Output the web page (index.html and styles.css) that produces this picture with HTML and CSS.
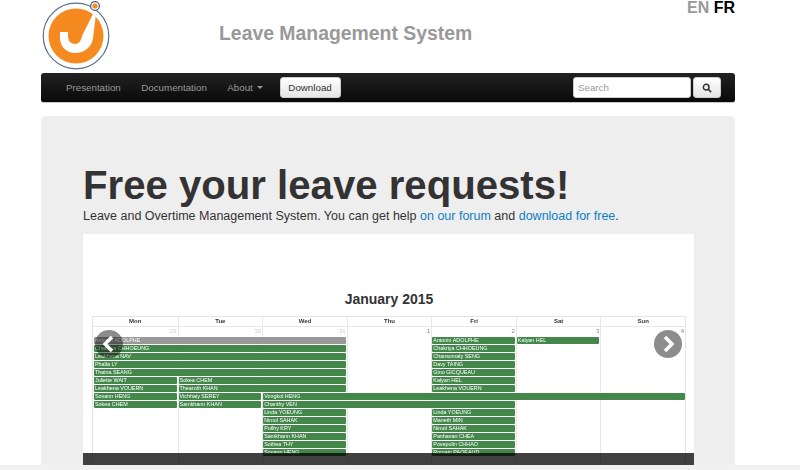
FILE: index.html
```html
<!DOCTYPE html>
<html lang="en">
<head>
  <meta charset="UTF-8" />
  <title>Leave Management System</title>
  <link rel="stylesheet" href="styles.css">
</head>
<body>

  <div class="page">
    <div class="header">
      <svg class="logo" viewBox="0 0 70 70" width="70" height="70">
        <circle cx="35" cy="35" r="32.8" fill="none" stroke="#5b6f8c" stroke-width="1.2"/>
        <circle cx="35" cy="35" r="27.5" fill="#f58a20"/>
        <path d="M19 31 H27 V35 C27 40 30 43 34 43 C38 43 40 40 41 35 L52 13 L55 13 L52 37 C51 46 43 52 34 52 C25 52 19 45 19 37 Z" fill="#fff"/>
        <circle cx="54" cy="5" r="4.4" fill="#fff" stroke="#4f6585" stroke-width="1.3"/>
        <circle cx="54" cy="5" r="2.6" fill="#f58a20"/>
      </svg>
      <div class="brand">Leave Management System</div>
      <div class="langs"><a class="lang-off">EN</a> <a class="lang-on">FR</a></div>
    </div>

    <div class="navbar">
      <a class="nav-link">Presentation</a>
      <a class="nav-link">Documentation</a>
      <a class="nav-link nav-about">About <span class="caret"></span></a>
      <a class="btn btn-download">Download</a>
      <div class="search">
        <input class="search-input" type="text" placeholder="Search" />
        <a class="btn btn-search">
          <svg viewBox="0 0 12 12" width="10" height="10">
            <circle cx="5" cy="5" r="3.4" fill="none" stroke="#333" stroke-width="1.8"/>
            <path d="M7.5 7.5 L11 11" stroke="#333" stroke-width="2"/>
          </svg>
        </a>
      </div>
    </div>

    <div class="jumbotron">
      <h1>Free your leave requests!</h1>
      <p class="lead">Leave and Overtime Management System. You can get help <a>on our forum</a> and <a>download for free</a>.</p>

      <div class="carousel">
        <h2 class="month">January 2015</h2>
        <div class="calendar">
          <div class="days">
            <div>Mon</div><div>Tue</div><div>Wed</div><div>Thu</div><div>Fri</div><div>Sat</div><div>Sun</div>
          </div>
          <div class="week">
            <div class="cells">
              <div class="cell old">29</div><div class="cell old">30</div><div class="cell old">31</div>
              <div class="cell">1</div><div class="cell">2</div><div class="cell">3</div><div class="cell">4</div>
            </div>
            <div class="events">
              <div class="ev gray s1 c3">Antonin ADOLPHE</div>
              <div class="ev s5 c1">Antonin ADOLPHE</div>
              <div class="ev s6 c1">Kalyan HEL</div>

              <div class="ev s1 c3">Chakriya CHHOEUNG</div>
              <div class="ev s5 c1">Chakriya CHHOEUNG</div>

              <div class="ev s1 c3">Leakhena NAV</div>
              <div class="ev s5 c1">Chansomaly SENG</div>

              <div class="ev s1 c3">Phalla LY</div>
              <div class="ev s5 c1">Davy TAING</div>

              <div class="ev s1 c3">Thaina SEANG</div>
              <div class="ev s5 c1">Gino GICQUEAU</div>

              <div class="ev s1 c1">Juliette WAIT</div>
              <div class="ev s2 c2">Sokea CHEM</div>
              <div class="ev s5 c1">Kalyan HEL</div>

              <div class="ev s1 c1">Leakhena VOUERN</div>
              <div class="ev s2 c2">Thearoth KHAN</div>
              <div class="ev s5 c1">Leakhena VOUERN</div>

              <div class="ev s1 c1">Sovann HENG</div>
              <div class="ev s2 c1">Vichhaiy SEREY</div>
              <div class="ev s3 c5 open">Vongkol HENG</div>

              <div class="ev s1 c1">Sokea CHEM</div>
              <div class="ev s2 c1">Samkhann KHAN</div>
              <div class="ev s3 c3">Chanthy VEN</div>

              <div class="ev s3 c1">Linda YOEUNG</div>
              <div class="ev s5 c1">Linda YOEUNG</div>
              <div class="ev s3 c1">Nimol SAHAK</div>
              <div class="ev s5 c1">Maneth MIN</div>
              <div class="ev s3 c1">Pullhy KRY</div>
              <div class="ev s5 c1">Nimol SAHAK</div>
              <div class="ev s3 c1">Samkhann KHAN</div>
              <div class="ev s5 c1">Panhavan CHEA</div>
              <div class="ev s3 c1">Sothea THY</div>
              <div class="ev s5 c1">Povepolin CHHAO</div>
              <div class="ev s3 c1">Sovann HENG</div>
              <div class="ev s5 c1">Romain PAOEAUD</div>
            </div>
          </div>
        </div>
        <div class="arrow arrow-left">
          <svg viewBox="0 0 28 28" width="28" height="28"><path d="M17 7 L10 14 L17 21" fill="none" stroke="#fff" stroke-width="3.4"/></svg>
        </div>
        <div class="arrow arrow-right">
          <svg viewBox="0 0 28 28" width="28" height="28"><path d="M11 7 L18 14 L11 21" fill="none" stroke="#fff" stroke-width="3.4"/></svg>
        </div>
        <div class="caption"></div>
      </div>
    </div>
  </div>

  <div class="scrollbar"></div>

</body>
</html>
```

FILE: styles.css
```css
html, body {
  height: 470px;
  overflow: hidden;
}

body {
  font-family: "Liberation Sans", Arial, sans-serif;
  color: #333;
  background: #fff;
  margin: 0;
}

.page {
  width: 694px;
  margin-left: 41px;
}

.header {
  height: 73px;
  display: flex;
}

.logo {
  margin-top: 1px;
  flex: none;
  display: block;
}

.brand {
  margin: 22px 0 0 108px;
  font-size: 19.4px;
  font-weight: bold;
  line-height: 23px;
  color: #999;
}

.langs {
  margin-left: auto;
  font-size: 16px;
  font-weight: bold;
  line-height: 15px;
}

.lang-off {
  color: #999;
}

.lang-on {
  color: #000;
}

.navbar {
  height: 30px;
  box-sizing: border-box;
  display: flex;
  align-items: center;
  padding: 0 14px 0 25px;
  border-radius: 3px;
  background: linear-gradient(to bottom, #222, #090909);
  border-bottom: 1px solid #c8c8c8;
}

.nav-link {
  font-size: 9.75px;
  color: #999;
  margin-right: 20.5px;
  margin-top: -1px;
}

.nav-about {
  margin-right: 17px;
}

.caret {
  display: inline-block;
  margin-left: 1px;
  vertical-align: 2px;
  border-top: 3px solid #999;
  border-left: 3px solid transparent;
  border-right: 3px solid transparent;
}

.btn {
  box-sizing: border-box;
  height: 21px;
  display: flex;
  align-items: center;
  justify-content: center;
  border-radius: 3px;
  background: linear-gradient(to bottom, #fff, #e4e4e4);
  border: 1px solid #ccc;
}

.btn-download {
  width: 61px;
  font-size: 9.75px;
  color: #333;
}

.search {
  margin-left: auto;
  display: flex;
  gap: 2px;
}

.search-input {
  box-sizing: border-box;
  width: 118px;
  height: 21px;
  padding: 0 4px;
  border: 1px solid #ccc;
  border-radius: 3px;
  font-family: inherit;
  font-size: 9.75px;
  background: #fff;
}

.search-input::placeholder {
  color: #999;
}

.btn-search {
  width: 28px;
}

.jumbotron {
  margin-top: 13px;
  padding: 47px 41px 0 42px;
  height: 349px;
  box-sizing: border-box;
  background: #eee;
  border-radius: 5px 5px 0 0;
}

h1 {
  margin: 0;
  font-size: 40.15px;
  line-height: 45px;
  font-weight: bold;
  color: #333;
}

.lead {
  margin: 0;
  font-size: 12.5px;
  line-height: 17px;
  color: #333;
}

.lead a {
  color: #0d7fc4;
}

.carousel {
  position: relative;
  margin-top: 9px;
  width: 611px;
  height: 231px;
  background: #fff;
  overflow: hidden;
  box-sizing: border-box;
  padding: 56px 8px 0 9px;
}

.month {
  margin: 0 0 8px;
  font-size: 14px;
  line-height: 18px;
  font-weight: bold;
  text-align: center;
  color: #333;
}

.calendar {
  border: 1px solid #e4e4e4;
  border-bottom: none;
  filter: blur(0.4px);
}

.days {
  display: grid;
  grid-template-columns: repeat(7, 1fr);
  height: 9px;
  border-bottom: 1px solid #e8e8e8;
}

.days div {
  font-size: 6px;
  font-weight: bold;
  line-height: 9px;
  text-align: center;
  border-left: 1px solid #e8e8e8;
}

.days div:first-child {
  border-left: none;
}

.week {
  position: relative;
}

.cells {
  display: grid;
  grid-template-columns: repeat(7, 1fr);
  height: 150px;
}

.cell {
  font-size: 6px;
  line-height: 9px;
  text-align: right;
  padding-right: 1px;
  color: #888;
  border-left: 1px solid #e8e8e8;
}

.cell:first-child {
  border-left: none;
}

.old {
  color: #ccc;
}

.events {
  position: absolute;
  top: 10px;
  left: 0;
  right: 0;
  display: grid;
  grid-template-columns: repeat(7, 1fr);
  grid-auto-rows: 8px;
}

.ev {
  font-size: 5.4px;
  line-height: 7px;
  height: 7px;
  margin: 0 1px;
  padding-left: 1px;
  border-radius: 1px;
  background: #43884a;
  color: #fff;
  white-space: nowrap;
  overflow: hidden;
}

.gray {
  background: #999;
}

.open {
  margin-right: 0;
}

.s1 { grid-column-start: 1; }
.s2 { grid-column-start: 2; }
.s3 { grid-column-start: 3; }
.s5 { grid-column-start: 5; }
.s6 { grid-column-start: 6; }
.c1 { grid-column-end: span 1; }
.c2 { grid-column-end: span 2; }
.c3 { grid-column-end: span 3; }
.c5 { grid-column-end: span 5; }

.arrow {
  position: absolute;
  top: 96px;
  width: 28px;
  height: 28px;
  border-radius: 50%;
  background: rgba(0, 0, 0, 0.45);
}

.arrow-left {
  left: 12px;
}

.arrow-right {
  right: 12px;
}

.caption {
  position: absolute;
  left: 0;
  right: 0;
  bottom: 0;
  height: 12px;
  background: rgba(0, 0, 0, 0.75);
}

.scrollbar {
  position: absolute;
  left: 0;
  right: 0;
  top: 465px;
  height: 5px;
  background: #f1f1f1;
}
```
